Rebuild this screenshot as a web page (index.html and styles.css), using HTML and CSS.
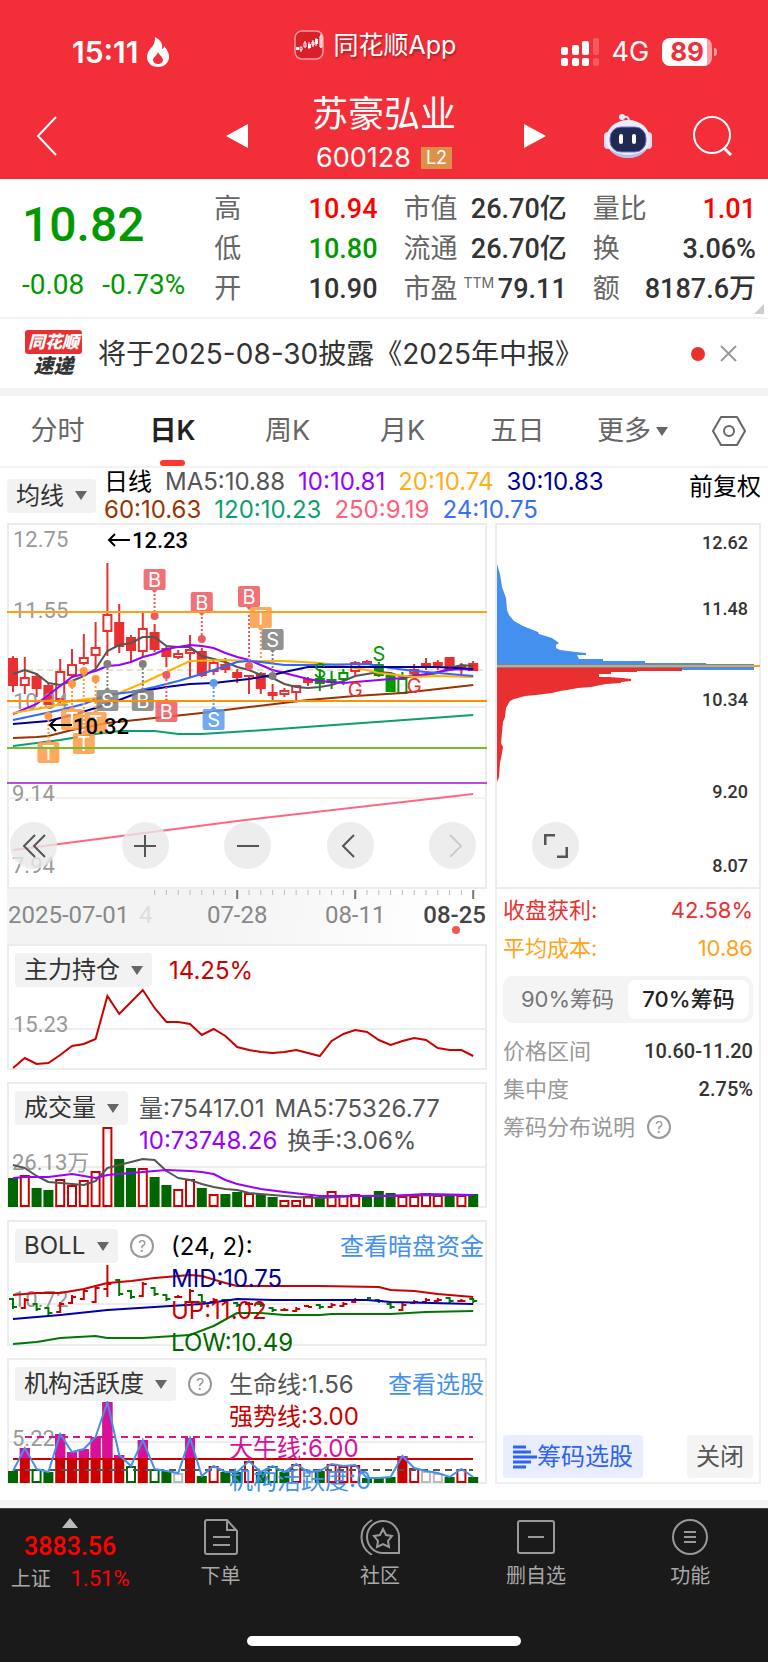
FILE: index.html
```html
<!DOCTYPE html>
<html lang="zh-CN">
<head>
<meta charset="utf-8" />
<meta name="viewport" content="width=device-width, initial-scale=1" />
<title>苏豪弘业 600128</title>
<link rel="stylesheet" href="styles.css">
</head>
<body>

<header class="top">
	<div class="status">
		<div class="clock">
			<span>15:11</span>
			<svg width="22" height="30" viewBox="0 0 22 30"><path fill="#fff" d="M8 0c6 3 8 7 7 12 1 0 2-1 2-3 3 3 5 7 5 11 0 6-5 10-11 10S0 26 0 20c0-4 2-7 4-9 3-3 4-6 4-11z"/><path fill="#f22f38" d="M11 15c1 3 5 5 5 8 0 2-2 4-5 4s-5-2-5-4c0-3 4-4 5-8z"/></svg>
		</div>
		<div class="app">
			<svg width="30" height="30" viewBox="0 0 30 30"><rect x="1" y="1" width="28" height="28" rx="7" fill="#d9202a" stroke="#f79a9e" stroke-width="1.5"/><path fill="#fff" d="M2 17h3v3H2zM14 14h3v4h-3zM21 9h3v5h-3z"/><path d="M6 17h2v3H6zM10 13h2v4h-2zM18 12h2v3h-2zM26 6h2v11h-2zM7 20v2M11 11v2M15 12v7M19 10v7M22 8v8M27 4v14" fill="none" stroke="#fff"/></svg>
			<span>同花顺App</span>
		</div>
		<div class="signal">
			<svg width="38" height="28" viewBox="0 0 38 28"><g fill="#fff"><rect x="0" y="9" width="7" height="8" rx="2"/><rect x="11" y="7" width="7" height="10" rx="2"/><rect x="21" y="3" width="7" height="14" rx="2"/><rect x="0" y="20" width="7" height="8" rx="2"/><rect x="11" y="20" width="7" height="8" rx="2"/><rect x="21" y="20" width="7" height="8" rx="2"/></g><g fill="#fff" opacity=".2"><rect x="32" y="0" width="6" height="17" rx="2"/><rect x="32" y="20" width="6" height="8" rx="2"/></g></svg>
			<span class="net">4G</span>
			<span class="battery">89</span>
		</div>
	</div>
	<nav class="titlebar">
		<button class="back" aria-label="返回"><svg width="22" height="40" viewBox="0 0 22 40"><path d="M20 1L2 20l18 19" fill="none" stroke="#fff" stroke-width="2"/></svg></button>
		<button class="prev" aria-label="上一只"><svg width="22" height="24" viewBox="0 0 22 24"><path d="M22 0v24L0 12z" fill="#fff"/></svg></button>
		<div class="stock">
			<h1>苏豪弘业</h1>
			<p>600128 <b>L2</b></p>
		</div>
		<button class="next" aria-label="下一只"><svg width="22" height="24" viewBox="0 0 22 24"><path d="M0 0v24l22-12z" fill="#fff"/></svg></button>
		<button class="robot" aria-label="智能助手"><svg width="48" height="44" viewBox="0 0 48 44"><path d="M25 8c0-5-2-6-6-5" fill="none" stroke="#dfe3f5" stroke-width="2"/><circle cx="18" cy="3" r="3" fill="#e9ecfa"/><rect x="0" y="18" width="8" height="17" rx="4" fill="#d9dcf2"/><rect x="40" y="18" width="8" height="17" rx="4" fill="#d9dcf2"/><ellipse cx="24" cy="25" rx="22" ry="19" fill="#eceefa"/><path d="M6 34c6 9 30 9 36 0-3 7-10 10-18 10S9 41 6 34z" fill="#b9bfe6"/><rect x="6" y="13" width="36" height="25" rx="11" fill="#1e2a52" stroke="#7d6fe0" stroke-width="1"/><rect x="15" y="20" width="4" height="10" rx="2" fill="#fff"/><rect x="28" y="20" width="4" height="10" rx="2" fill="#fff"/></svg></button>
		<button class="search" aria-label="搜索"><svg width="40" height="40" viewBox="0 0 40 40"><circle cx="20" cy="19" r="18" fill="none" stroke="#fff" stroke-width="2"/><path d="M32 32l7 7" stroke="#fff" stroke-width="3"/></svg></button>
	</nav>
</header>

<section class="quote">
	<div class="price">
		<strong>10.82</strong>
		<p><span>-0.08</span><span>-0.73%</span></p>
	</div>
	<dl>
		<div><dt>高</dt><dd class="up">10.94</dd></div>
		<div><dt>低</dt><dd class="down">10.80</dd></div>
		<div><dt>开</dt><dd>10.90</dd></div>
	</dl>
	<dl>
		<div><dt>市值</dt><dd>26.70亿</dd></div>
		<div><dt>流通</dt><dd>26.70亿</dd></div>
		<div><dt>市盈<sup>TTM</sup></dt><dd>79.11</dd></div>
	</dl>
	<dl>
		<div><dt>量比</dt><dd class="up">1.01</dd></div>
		<div><dt>换</dt><dd>3.06%</dd></div>
		<div><dt>额</dt><dd>8187.6万</dd></div>
	</dl>
	<i class="corner"></i>
</section>

<section class="news">
	<div class="brand"><b>同花顺</b><i>速递</i></div>
	<a href="#report">将于2025-08-30披露《2025年中报》</a>
	<i class="dot"></i>
	<button aria-label="关闭"><svg width="17" height="17" viewBox="0 0 17 17"><path d="M1 1l15 15M16 1L1 16" stroke="#999" stroke-width="2"/></svg></button>
</section>

<nav class="tabs">
	<button>分时</button>
	<button class="on">日K</button>
	<button>周K</button>
	<button>月K</button>
	<button>五日</button>
	<label class="more"><select aria-label="更多周期"><option>更多</option></select></label>
	<button class="gear" aria-label="设置"><svg width="34" height="32" viewBox="0 0 34 32"><path d="M9 2h16l8 14-8 14H9L1 16z" fill="none" stroke="#666" stroke-width="2" stroke-linejoin="round"/><circle cx="17" cy="16" r="5" fill="none" stroke="#666" stroke-width="2"/></svg></button>
</nav>

<main class="board">
	<div class="legend">
		<label class="pick"><select aria-label="主图指标"><option>均线</option></select></label>
		<p>
			<span class="c-black">日线</span><span class="c-gray">MA5:10.88</span><span class="c-purple">10:10.81</span><span class="c-yellow">20:10.74</span><span class="c-navy">30:10.83</span><br>
			<span class="c-brown">60:10.63</span><span class="c-green">120:10.23</span><span class="c-pink">250:9.19</span><span class="c-blue">24:10.75</span>
		</p>
		<a href="#fq">前复权</a>
	</div>

	<div class="cols">
		<div class="left">
			<section class="kline">
				<svg id="kline" viewBox="0 0 480 366"></svg>
				<div class="tools">
					<button aria-label="最早"><svg width="24" height="24" viewBox="0 0 24 24"><path d="M13 1L2 12l11 11M23 1L12 12l11 11"/></svg></button>
					<button aria-label="放大"><svg width="24" height="24" viewBox="0 0 24 24"><path d="M1 12h22M12 1v22"/></svg></button>
					<button aria-label="缩小"><svg width="24" height="24" viewBox="0 0 24 24"><path d="M1 12h22"/></svg></button>
					<button aria-label="左移"><svg width="24" height="24" viewBox="0 0 24 24"><path d="M16 1L5 12l11 11"/></svg></button>
					<button aria-label="右移" disabled><svg width="24" height="24" viewBox="0 0 24 24"><path d="M9 1l11 11L9 23"/></svg></button>
				</div>
			</section>
			<svg id="axis" class="axis" viewBox="0 0 480 55"></svg>

			<section class="panel">
				<svg id="hold" viewBox="0 0 480 126"></svg>
				<div class="head">
					<label class="pick"><select aria-label="指标一"><option>主力持仓</option></select></label>
					<p class="c-red">14.25%</p>
				</div>
			</section>
			<section class="panel">
				<svg id="volume" viewBox="0 0 480 126"></svg>
				<div class="head tight">
					<label class="pick"><select aria-label="指标二"><option>成交量</option></select></label>
					<p><span class="c-gray">量:75417.01</span><span class="c-gray">MA5:75326.77</span><br><span class="c-purple">10:73748.26</span><span class="c-gray">换手:3.06%</span></p>
				</div>
			</section>
			<section class="panel">
				<svg id="boll" viewBox="0 0 480 126"></svg>
				<div class="head">
					<label class="pick"><select aria-label="指标三"><option>BOLL</option></select></label>
					<button class="help" aria-label="说明">?</button>
					<p><span class="c-black">(24, 2):</span><br><span class="c-navy">MID:10.75</span><br><span class="c-red">UP:11.02</span><br><span class="c-dark">LOW:10.49</span></p>
					<a href="#dark">查看暗盘资金</a>
				</div>
			</section>
			<section class="panel">
				<svg id="active" viewBox="0 0 480 126"></svg>
				<div class="head">
					<label class="pick"><select aria-label="指标四"><option>机构活跃度</option></select></label>
					<button class="help" aria-label="说明">?</button>
					<p><span class="c-gray">生命线:1.56</span><br><span class="c-red">强势线:3.00</span><br><span class="c-magenta">大牛线:6.00</span><br><span class="c-sky">机构活跃度:0</span></p>
					<a href="#pick">查看选股</a>
				</div>
			</section>
		</div>

		<aside class="right">
			<section class="kline">
				<svg id="chips" viewBox="0 0 266 366"></svg>
				<div class="tools">
					<button aria-label="全屏"><svg width="24" height="24" viewBox="0 0 24 24"><path d="M1 11V1h10M13 23h10V13"/></svg></button>
				</div>
			</section>
			<div class="info">
				<p class="row c-rose"><span>收盘获利:</span><span>42.58%</span></p>
				<p class="row c-amber"><span>平均成本:</span><span>10.86</span></p>
				<div class="seg">
					<label><input type="radio" name="chip"><span>90%筹码</span></label>
					<label><input type="radio" name="chip" checked><span>70%筹码</span></label>
				</div>
				<p class="row"><span>价格区间</span><b>10.60-11.20</b></p>
				<p class="row"><span>集中度</span><b>2.75%</b></p>
				<p class="row note"><span>筹码分布说明</span><button class="help" aria-label="说明">?</button></p>
				<div class="acts">
					<button class="pickstock"><svg width="24" height="24" viewBox="0 0 24 24"><path d="M0 2h13M0 7h18M0 12h24M0 17h18M0 22h13" stroke="#2f62f5" stroke-width="3"/></svg>筹码选股</button>
					<button class="close">关闭</button>
				</div>
			</div>
		</aside>
	</div>
</main>

<footer class="bottom">
	<nav>
		<a class="index" href="#sh"><i></i><b>3883.56</b><span>上证 <em>1.51%</em></span></a>
		<a href="#order"><svg width="36" height="36" viewBox="0 0 36 36"><path d="M2 3a2 2 0 0 1 2-2h20l10 11v21a2 2 0 0 1-2 2H4a2 2 0 0 1-2-2zM24 1v10h10M10 18h17M10 26h17"/></svg>下单</a>
		<a href="#club"><svg width="40" height="36" viewBox="0 0 40 36"><path d="M12 1C-2 9-2 27 12 36M39 34H23A16 16 0 1 1 39 19zM23 10l3 6 6 1-4 5 1 6-6-3-6 3 1-6-4-5 6-1z"/></svg>社区</a>
		<a href="#fav"><svg width="38" height="36" viewBox="0 0 38 36"><path d="M3 2h32a2 2 0 0 1 2 2v28a2 2 0 0 1-2 2H3a2 2 0 0 1-2-2V4a2 2 0 0 1 2-2zM11 18h16"/></svg>删自选</a>
		<a href="#func"><svg width="36" height="36" viewBox="0 0 36 36"><circle cx="18" cy="18" r="17"/><path d="M12 13h12M12 18h12M12 23h12"/></svg>功能</a>
	</nav>
	<div class="home"></div>
</footer>

<script type="text/javascript" src="script.js"></script>
</body>
</html>
```
FILE: styles.css
```css
* {
	box-sizing:border-box;
}
body {
	margin:0;
	background:#fff;
	color:#333;
	font:24px/32px Inter, "Noto Sans CJK SC", sans-serif;
}
h1, p, dl, dd {
	margin:0;
	font-weight:normal;
}
a {
	color:inherit;
	text-decoration:none;
}
i, em {
	font-style:normal;
}
button {
	padding:0;
	border:0;
	background:none;
	color:inherit;
	font:inherit;
}
svg {
	display:block;
	flex:none;
}
select {
	appearance:none;
	border:0;
	padding:0;
	background:none;
	color:inherit;
	font:inherit;
}

/* 顶部 */
.top {
	height:179px;
	padding-top:30px;
	background:#f22f38;
	color:#fff;
}
.status {
	display:grid;
	grid-template-columns:1fr auto 1fr;
}
.status > div {
	display:flex;
	align-items:center;
}
.clock {
	gap:8px;
	padding:6px 0 0 72px;
	font-size:30px;
	font-weight:600;
}
.app {
	gap:10px;
	height:30px;
	padding-right:18px;
	font-size:25px;
	text-shadow:1px 2px 2px rgba(0,0,0,.3);
}
.signal {
	justify-content:flex-end;
	gap:13px;
	padding:6px 56px 0 0;
	font-size:27px;
}
.battery {
	position:relative;
	height:28px;
	padding:0 8px;
	border-radius:8px;
	background:linear-gradient(90deg, #fff 90%, #f9a0a5 90%);
	color:#f22f38;
	font-size:26px;
	font-weight:700;
	line-height:28px;
}
.battery:after {
	content:"";
	position:absolute;
	right:-5px;
	top:10px;
	width:3px;
	height:8px;
	border-radius:0 4px 4px 0;
	background:#f9a0a5;
}
.titlebar {
	display:grid;
	grid-template-columns:190fr 86fr 144fr 68fr 80fr 88fr 40fr;
	align-items:center;
	justify-items:start;
	padding:24px 36px 0;
}
.titlebar .next {
	grid-column:5;
}
.stock {
	justify-self:center;
	text-align:center;
	white-space:nowrap;
}
.stock h1 {
	font-size:36px;
	line-height:44px;
}
.stock p {
	display:flex;
	justify-content:center;
	align-items:center;
	gap:10px;
	font-size:27px;
	line-height:44px;
}
.stock b {
	padding:0 5px;
	background:#e08f48;
	font-size:18px;
	font-weight:normal;
	line-height:22px;
}

/* 行情 */
.quote {
	position:relative;
	display:grid;
	grid-template-columns:166fr 163fr 163fr 163fr;
	gap:26px;
	height:140px;
	padding:10px 12px 0 22px;
	border-bottom:2px solid #f3f3f4;
	font-size:27px;
	line-height:40px;
}
.price, dd, .info b, .index b, .index em {
	font-family:Roboto, "Noto Sans CJK SC", sans-serif;
}
.price {
	color:#009900;
}
.price strong {
	display:block;
	padding-top:6px;
	font-size:48px;
	font-weight:500;
	line-height:60px;
}
.price p {
	display:flex;
	gap:18px;
	padding-top:10px;
	font-size:28px;
}
.quote dl div {
	display:flex;
	justify-content:space-between;
}
.quote dt {
	color:#666;
}
.quote sup {
	padding-left:6px;
	font-size:14px;
	line-height:14px;
}
.quote dd {
	font-weight:500;
}
.quote .up {
	color:#ff0000;
}
.quote .down {
	color:#009900;
}
.corner {
	position:absolute;
	right:4px;
	bottom:3px;
	border:5px solid #ccc;
	border-top-color:transparent;
	border-left-color:transparent;
}

/* 公告 */
.news {
	display:flex;
	align-items:center;
	height:77px;
	padding:0 31px 0 25px;
	border-bottom:8px solid #f4f4f4;
	font-size:28px;
}
.news a {
	flex:1;
	padding-left:16px;
}
.brand {
	display:flex;
	flex-direction:column;
	align-items:center;
	width:57px;
	font-size:18px;
	font-weight:900;
	line-height:24px;
}
.brand b {
	width:100%;
	border-radius:3px;
	background:#ea2f33;
	color:#fff;
	text-align:center;
	font-size:17px;
	font-style:italic;
}
.brand i {
	font-style:italic;
	font-size:20px;
}
.dot {
	width:14px;
	height:14px;
	margin-right:15px;
	border-radius:50%;
	background:#ea2f2f;
}

/* 周期 */
.tabs {
	display:grid;
	grid-template-columns:repeat(6, 115fr) 78fr;
	justify-items:center;
	align-items:center;
	height:72px;
	border-bottom:2px solid #f3f3f4;
	color:#666;
	font-size:27px;
}
.tabs .on {
	position:relative;
	color:#222;
	font-weight:600;
}
.tabs .on:after {
	content:"";
	position:absolute;
	left:10px;
	right:10px;
	bottom:-19px;
	height:6px;
	border-radius:3px;
	background:#fa3a2f;
}
.more, .pick {
	display:flex;
	align-items:center;
	gap:11px;
}
.more {
	gap:5px;
}
.more:after, .pick:after {
	content:"";
	border:6px solid transparent;
	border-top:9px solid #666;
	border-bottom:0;
}

/* 图表 */
.board {
	padding:0 7px 16px;
	border-bottom:8px solid #f4f4f4;
}
.legend {
	display:flex;
	align-items:center;
	height:55px;
	color:#000;
	line-height:28px;
}
.legend p {
	flex:1;
	padding-left:8px;
	white-space:nowrap;
}
.legend p span {
	margin-right:13px;
}
.legend a {
	align-self:flex-start;
	padding-top:5px;
}
.pick {
	height:34px;
	padding:0 9px;
	border-radius:4px;
	background:#f2f2f2;
	color:#333;
}
.c-black { color:#000; }
.c-gray { color:#555; }
.c-purple { color:#9900ff; }
.c-yellow { color:#ffb019; }
.c-navy { color:#000099; }
.c-brown { color:#993300; }
.c-green { color:#0d9e6e; }
.c-pink { color:#ff5f7a; }
.c-blue { color:#3a6dfa; }
.c-red { color:#cc0000; }
.c-dark { color:#006600; }
.c-magenta { color:#d9109a; }
.c-sky { color:#4390ee; }

.cols {
	display:grid;
	grid-template-columns:480fr 266fr;
	gap:8px;
}
.cols svg text {
	font-family:Roboto, "Noto Sans CJK SC", sans-serif;
	font-size:22px;
}
.cols svg .date {
	font-size:24px;
}
.cols svg .sign {
	font-family:Inter, sans-serif;
	font-size:20px;
}
.cols svg .cost {
	font-size:18px;
	font-weight:500;
}
.kline {
	position:relative;
}
.kline > svg, .panel > svg, .axis {
	width:100%;
}
.kline, .panel {
	box-shadow:inset 0 0 0 2px #ececec;
}
.tools {
	position:absolute;
	left:0;
	right:0;
	bottom:20px;
	display:flex;
	justify-content:space-between;
	padding:0 11px 0 3px;
}
.tools button {
	width:47px;
	height:47px;
	border-radius:50%;
	background:rgba(232,232,232,.8);
}
.left .tools button:first-child {
	margin-right:9px;
}
.tools svg {
	margin:auto;
	fill:none;
	stroke:#555;
	stroke-width:2;
}
.tools button:disabled svg {
	stroke:#ccc;
}
.right .tools svg {
	stroke-width:3;
}
.axis {
	background:linear-gradient(100deg, #f3f3f3 40%, #fff 92%);
}
.panel {
	display:grid;
	margin-bottom:12px;
}
.panel:last-child {
	margin-bottom:0;
}
.panel > svg, .head {
	grid-area:1 / 1;
}
.head {
	position:relative;
	display:flex;
	align-items:flex-start;
	height:0;
	padding:9px 3px 0 8px;
}
.head p, .head a {
	padding-top:2px;
}
.head p {
	flex:1;
	padding-left:17px;
	white-space:nowrap;
}
.head.tight p {
	padding-left:11px;
}
.head.tight span {
	margin-right:10px;
}
.head a {
	color:#4390ee;
}
.help {
	flex:none;
	width:24px;
	height:24px;
	margin:5px 0 0 12px;
	border:2px solid #999;
	border-radius:50%;
	color:#999;
	font-size:16px;
	line-height:20px;
}

.right {
	display:flex;
	flex-direction:column;
	box-shadow:inset 0 0 0 2px #f0f0f0;
}
.right .tools {
	padding-left:37px;
}
.info {
	flex:1;
	display:flex;
	flex-direction:column;
	padding:2px 8px 6px;
	font-size:22px;
}
.row {
	display:flex;
	justify-content:space-between;
	align-items:center;
	height:38px;
	color:#999;
}
.row b {
	color:#333;
	font-size:20px;
	font-weight:500;
}
.c-rose { color:#ea2f2f; }
.c-amber { color:#ffa31a; }
.note {
	justify-content:flex-start;
}
.note .help {
	margin-top:0;
}
.seg {
	display:flex;
	height:47px;
	margin:9px 0;
	padding:4px;
	border-radius:10px;
	background:#f4f4f4;
	color:#777;
}
.seg label {
	flex:1;
	display:flex;
}
.seg input {
	position:absolute;
	opacity:0;
}
.seg span {
	flex:1;
	border-radius:8px;
	text-align:center;
	line-height:39px;
}
.seg input:checked + span {
	background:#fff;
	color:#222;
	font-weight:500;
}
.acts {
	display:flex;
	justify-content:space-between;
	margin-top:auto;
}
.acts button {
	display:flex;
	align-items:center;
	height:43px;
	padding:0 10px;
	border-radius:4px;
	font-size:24px;
}
.pickstock {
	background:#e8eeff;
	color:#2f62f5;
}
.acts .close {
	padding:0 9px;
	background:#f4f4f4;
	color:#555;
}

/* 底部 */
.bottom {
	height:154px;
	border-top:1px solid #444;
	background:#1a1a1a;
	color:#a8a8a8;
	font-size:20px;
}
.bottom nav {
	display:grid;
	grid-template-columns:140fr 160fr 158fr 153fr 155fr;
	height:127px;
}
.bottom a {
	display:flex;
	flex-direction:column;
	align-items:center;
	gap:8px;
	padding-top:10px;
	line-height:26px;
}
.bottom svg {
	fill:none;
	stroke:#999;
	stroke-width:2;
}
.bottom .index {
	gap:6px;
	padding-top:9px;
}
.index i {
	border:8px solid transparent;
	border-top:0;
	border-bottom:10px solid #bbb;
}
.index b, .index em {
	color:#ff0000;
	font-size:22px;
	font-weight:400;
}
.index b {
	font-size:25px;
	font-weight:500;
}
.index em {
	padding-left:14px;
}
.home {
	width:274px;
	height:10px;
	margin:0 auto;
	border-radius:5px;
	background:#fff;
}
```
FILE: script.js
```js
var $ = function (id) {
    return document.getElementById(id);
};

var STEP = 11.8, LEFT = 6;
var RED = "#e83030", GREEN = "#009900";

var px = function (i) {
    return Math.round((LEFT + STEP * i) * 10) / 10;
};
var line = function (x1, y1, x2, y2, color, width, dash) {
    return '<line x1="' + x1 + '" y1="' + y1 + '" x2="' + x2 + '" y2="' + y2 + '" stroke="' + color + '" stroke-width="' + (width || 2) + '"' + (dash ? ' stroke-dasharray="' + dash + '"' : '') + '/>';
};
var rect = function (x, y, w, h, fill, stroke) {
    return '<rect x="' + x + '" y="' + y + '" width="' + w + '" height="' + h + '" fill="' + fill + '"' + (stroke ? ' stroke="' + stroke + '" stroke-width="2"' : '') + '/>';
};
var text = function (x, y, s, color, attr) {
    return '<text x="' + x + '" y="' + y + '" fill="' + color + '" ' + (attr || '') + '>' + s + '</text>';
};
//每根K线一个值
var curve = function (ys, color, width) {
    var pts = [];
    for (var i = 0; i < ys.length; i++) { pts.push(px(i) + "," + ys[i]); }
    return '<polyline points="' + pts.join(" ") + '" fill="none" stroke="' + color + '" stroke-width="' + (width || 2) + '"/>';
};
//只给关键点 序号,值,序号,值
var sparse = function (a, color) {
    var pts = [];
    for (var i = 0; i < a.length; i += 2) { pts.push(px(a[i]) + "," + a[i + 1]); }
    return '<polyline points="' + pts.join(" ") + '" fill="none" stroke="' + color + '" stroke-width="2" stroke-linejoin="round"/>';
};
//大写空心 小写实心
var bar = function (i, kind, top, bottom, colors) {
    var x = px(i), c = colors[kind.toLowerCase()], h = Math.max(bottom - top, 2);
    return kind == kind.toUpperCase() ? rect(x - 4, top + 1, 8, Math.max(h - 2, 1), "#fff", c) : rect(x - 5, top, 10, h, c);
};

//主图
var candles = [
    ["r",133,135,163,169],["R",134,154,163,171],["r",150,153,166,174],["r",160,162,182,182],["R",136,148,177,182],
    ["R",126,141,153,155],["R",111,134,141,142],["R",99,124,133,145],["R",40,91,109,133],["r",81,99,124,130],
    ["r",112,114,128,139],["R",89,105,129,134],["r",101,109,127,129],["r",124,125,134,144],["R",127,130,135,136],
    ["R",112,126,131,155],["r",125,128,153,154],["R",138,139,149,152],["r",135,141,147,150],["r",146,149,155,160],
    ["r",152,152,154,171],["r",149,150,166,171],["r",161,169,173,177],["R",165,167,172,174],["R",162,162,170,177],
    ["r",154,156,160,163],["g",146,155,161,168],["g",148,156,160,166],["G",146,149,157,162],["R",138,139,149,154],
    ["r",137,138,141,141],["g",139,141,153,154],["g",149,152,169,169],["G",149,155,171,171],["R",141,146,151,152],
    ["R",135,140,143,147],["R",137,139,143,147],["r",134,134,146,146],["r",140,142,146,151],["r",138,140,148,148]
];
//序号,字,方块顶,圆点y,颜色
var marks = [
    [12,"B",46,93,"#ee5a60"],[16,"B",69,116,"#ee5a60"],[20,"B",63,143,"#ee5a60"],[21,"T",84,0,"#ff9a44"],[22,"S",106,153,"#808080"],
    [8,"S",167,141,"#808080"],[11,"B",167,141,"#808080"],[13,"B",178,152,"#ee5a60"],[17,"S",186,160,"#5a9cf0"],
    [3,"T",219,193,"#ff9a44"],[5,"T",186,161,"#ff9a44"],[6,"T",210,148,"#ff9a44"],[7,"T",189,156,"#ff9a44"]
];
var drawKline = function () {
    var s = line(0, 184, 480, 184, "#eee") + line(0, 275, 480, 275, "#f2f2f2");
    s += line(0, 147, 480, 147, "#d9c49a", 1, "6 4");
    for (var i = 0; i < candles.length; i++) {
        var k = candles[i], c = k[0].toLowerCase() == "r" ? RED : GREEN;
        s += line(px(i), k[1], px(i), k[4], c) + bar(i, k[0], k[2], k[3], {r: RED, g: GREEN});
    }
    s += text(6, 24, "12.75", "#999") + text(6, 95, "11.55", "#999") + text(6, 186, "10.34", "#999");
    s += text(5, 278, "9.14", "#999") + text(5, 350, "7.94", "#999");
    s += curve([151,147,151,160,162,158,153,146,128,122,120,114,114,123,124,124,133,136,139,144,147,152,155,161,164,165,164,162,158,153,151,149,150,154,152,152,150,145,142,143], "#555");
    s += curve([191,186,181,172,163,154,151,148,143,142,139,134,131,126,124,122,123,125,130,134,137,142,147,150,153,156,158,159,160,159,158,157,156,155,153,151,149,147,146,147], "#9900ff");
    s += sparse([0,190,3,184,5,178,7,175,9,170,10,165,11,160,13,149,15,138,18,137,20,138,23,138,26,140,28,143,30,147,31,150,34,154,36,153,39,154], "#ffb300");
    s += sparse([0,197,2,192,4,187,6,181,8,172,10,169,12,164,14,158,16,151,18,143,19,139,20,138,21,139,23,142,25,142,30,141,31,143,32,145,34,148,36,150,39,153], "#3366ff");
    s += sparse([0,201,3,198,5,192,7,185,9,177,11,168,13,164,15,161,17,160,20,156,22,152,23,149,25,144,29,144,33,144,36,144,39,146], "#000099");
    s += sparse([0,215,2,214,3,213,5,207,8,200,12,195,16,190,20,184,25,177,29,173,33,170,36,166,39,162], "#993300");
    s += sparse([0,223,4,217,7,211,9,208,12,208,14,211,16,211,20,208,26,203,32,198,39,192], "#0d9e6e");
    s += sparse([0,327,19,298,39,271], "#ff6680");
    for (i = 0; i < marks.length; i++) {
        var m = marks[i], x = px(m[0]), y = m[2], dot = m[3] || 137, below = dot > y;
        s += line(x, below ? y + 21 : y, x, dot, m[4], 2, "2 2");
        if (m[3]) { s += '<circle cx="' + x + '" cy="' + dot + '" r="4" fill="' + m[4] + '"/>'; }
        s += '<g opacity=".85"><rect x="' + (x - 11) + '" y="' + y + '" width="22" height="21" rx="2" fill="' + m[4] + '"/>';
        s += below ? '<path d="M' + (x - 3) + ' ' + (y + 21) + 'h6l-3 3z" fill="' + m[4] + '"/>' : '<path d="M' + (x - 3) + ' ' + y + 'h6l-3-3z" fill="' + m[4] + '"/>';
        s += '</g>' + text(x, y + 18, m[1], "#fff", 'class="sign" text-anchor="middle"');
    }
    s += line(0, 89, 480, 89, "#ff9f1a", 2) + line(0, 178, 480, 178, "#ff9100", 2) + line(0, 225, 480, 225, "#74bd2e", 2) + line(0, 260, 480, 260, "#b44fe0", 2);
    s += text(px(26), 155, "S", GREEN, 'class="sign" text-anchor="middle"') + text(px(31), 138, "S", GREEN, 'class="sign" text-anchor="middle"');
    s += text(px(29), 174, "G", RED, 'class="sign" text-anchor="middle"') + text(px(34), 170, "G", RED, 'class="sign" text-anchor="middle"');
    s += '<path d="M123 17h-21M108 11l-6 6 6 6M65 202H43M49 196l-6 6 6 6" fill="none" stroke="#000" stroke-width="2"/>';
    s += text(125, 25, "12.23", "#000", 'font-weight="500"') + text(66, 211, "10.32", "#000", 'font-weight="500"');
    $("kline").innerHTML = s;
};

var drawAxis = function () {
    var s = "";
    for (var i = 12; i < 40; i++) {
        var major = i == 19 || i == 29 || i == 39;
        s += line(px(i), 1, px(i), major ? 10 : 6, major ? "#777" : "#bbb", major ? 2 : 1);
    }
    s += text(1, 34, "2025-07-01", "#888", 'class="date"') + text(132, 34, "4", "#ddd", 'class="date"');
    s += text(px(19), 34, "07-28", "#888", 'class="date" text-anchor="middle"') + text(px(29), 34, "08-11", "#888", 'class="date" text-anchor="middle"');
    s += text(479, 34, "08-25", "#444", 'class="date" text-anchor="end" font-weight="500"') + '<circle cx="449" cy="41" r="4" fill="#f25555"/>';
    $("axis").innerHTML = s;
};

//主力持仓
var drawHold = function () {
    $("hold").innerHTML = line(0, 85, 480, 85, "#eee") + text(6, 88, "15.23", "#999") +
        curve([124,114,120,119,111,102,100,95,52,70,58,46,64,78,78,80,91,85,92,103,106,108,109,108,106,109,112,97,90,86,88,96,101,97,94,96,104,106,106,112], "#cc0000");
};

//成交量
var drawVolume = function () {
    var kinds = "gRggRRRRRggRggRRgRggRggRRRgRRRgggRRRRgRg";
    var tops = [96,93,106,108,97,103,98,89,45,77,86,86,95,103,107,97,106,112,112,110,111,112,115,118,118,114,115,109,113,112,115,109,111,114,114,111,113,113,113,112];
    var s = line(0, 85, 480, 85, "#eee") + text(5, 88, "26.13万", "#999");
    for (var i = 0; i < tops.length; i++) { s += bar(i, kinds.charAt(i), tops[i], 125, {r: "#cc0000", g: "#006600"}); }
    s += sparse([0,83,1,86,2,94,3,100,6,103,7,99,8,86,9,83,10,80,11,77,12,78,13,89,14,96,15,98,16,102,17,105,18,107,19,108,20,111,22,113,24,115,26,116,29,114,39,113], "#555");
    s += sparse([0,96,1,95,3,95,5,92,7,96,8,93,11,90,13,88,15,89,16,90,17,92,18,98,19,102,21,107,23,110,26,114,32,114,35,112,39,113], "#9900ff");
    $("volume").innerHTML = s;
};

//布林线
var drawBoll = function () {
    var kinds = "grggrrrrrggrggrrgrggrggrrrgrrrgggrrrrgrg";
    var hl = [78,89,78,89,83,91,87,95,82,93,75,84,69,80,66,83,45,77,59,76,70,79,62,77,67,76,74,81,75,78,69,83,74,84,78,83,79,82,82,87,82,85,83,87,87,92,88,91,87,92,85,87,84,89,83,88,82,87,78,83,79,80,79,83,83,89,83,91,80,84,78,83,78,82,77,83,79,82,78,83];
    var s = line(0, 84, 480, 84, "#eee") + text(6, 87, "10.72", "#999");
    for (var i = 0; i < 40; i++) {
        var hi = hl[i * 2], lo = hl[i * 2 + 1], x = px(i), g = kinds.charAt(i) == "g", c = g ? "#007700" : "#cc0000";
        s += line(x, hi, x, lo, c);
        s += i == 8 ? line(x - 4, 69, x, 69, c) + line(x, 64, x + 4, 64, c) : line(x - 4, g ? hi + 1 : lo - 1, x, g ? hi + 1 : lo - 1, c) + line(x, g ? lo - 2 : hi + 2, x + 4, g ? lo - 2 : hi + 2, c);
    }
    s += sparse([0,75,2,73,4,73,6,69,8,63,10,61,12,58,15,55,16,56,18,63,19,66,26,66,31,67,32,70,34,71,36,74,39,77], "#cc0000");
    s += sparse([0,99,4,95,8,90,12,87,16,84,19,79,22,80,30,80,32,82,39,84], "#0000aa");
    s += sparse([0,124,2,122,4,118,7,116,8,118,11,118,15,115,17,106,19,93,21,93,23,95,26,95,27,94,31,94,32,94,35,92,39,91], "#007700");
    $("boll").innerHTML = s;
};

//机构活跃度
var drawActive = function () {
    var kinds = "grGgrrrrrrGrGgWrgRggRgGgRWgRRRgggrRWWgRg";
    var tops = [113,90,111,114,76,94,91,79,44,97,108,82,111,113,115,80,118,108,114,114,103,114,108,114,106,114,113,106,108,107,120,120,119,98,110,113,115,119,111,119];
    var s = line(0, 84, 480, 84, "#eee") + text(5, 88, "5.22", "#999");
    for (var i = 0; i < tops.length; i++) {
        s += bar(i, kinds.charAt(i), tops[i], 125, {r: "#cc0000", g: "#006600", w: "#bbb"});
        if (tops[i] < 101) { s += rect(px(i) - 5, tops[i], 10, 101 - tops[i], "#d9109a"); }
    }
    s += line(18, 79, 466, 79, "#d9109a", 2, "7 5") + line(6, 112, 466, 112, "#555", 2, "7 5") + line(6, 101, 466, 101, "#cc0000");
    s += curve(tops, "#4390ee");
    $("active").innerHTML = s;
};

//筹码分布
var drawChips = function () {
    var s = '<polygon fill="#4390ee" points="2,41 5,51 7,64 11,75 12,87 14,92 19,98 28,103 43,109 44,111 57,115 64,120 61,122 61,125 65,127 73,128 81,129 91,130 91,132 82,132 84,136 108,136 108,138 150,138 150,140 211,140 211,141 259,141 259,147 2,147"/>';
    s += '<polygon fill="#e83030" points="2,145 187,145 187,148 142,148 142,149 116,149 116,151 104,151 104,154 114,154 128,155 136,156 136,158 126,159 126,160 111,161 101,163 96,164 83,165 72,167 65,168 57,170 41,172 30,173 23,175 19,176 15,178 11,185 10,194 8,199 6,220 8,224 7,230 5,240 4,254 2,259"/>';
    s += line(2, 143, 265, 143, "#f5a030", 2);
    var labels = ["12.62", 26, "11.48", 92, "10.34", 183, "9.20", 275, "8.07", 349];
    for (var i = 0; i < labels.length; i += 2) {
        s += text(253, labels[i + 1], labels[i], "#333", 'class="cost" text-anchor="end"');
    }
    $("chips").innerHTML = s;
};

drawKline();
drawAxis();
drawHold();
drawVolume();
drawBoll();
drawActive();
drawChips();
```
